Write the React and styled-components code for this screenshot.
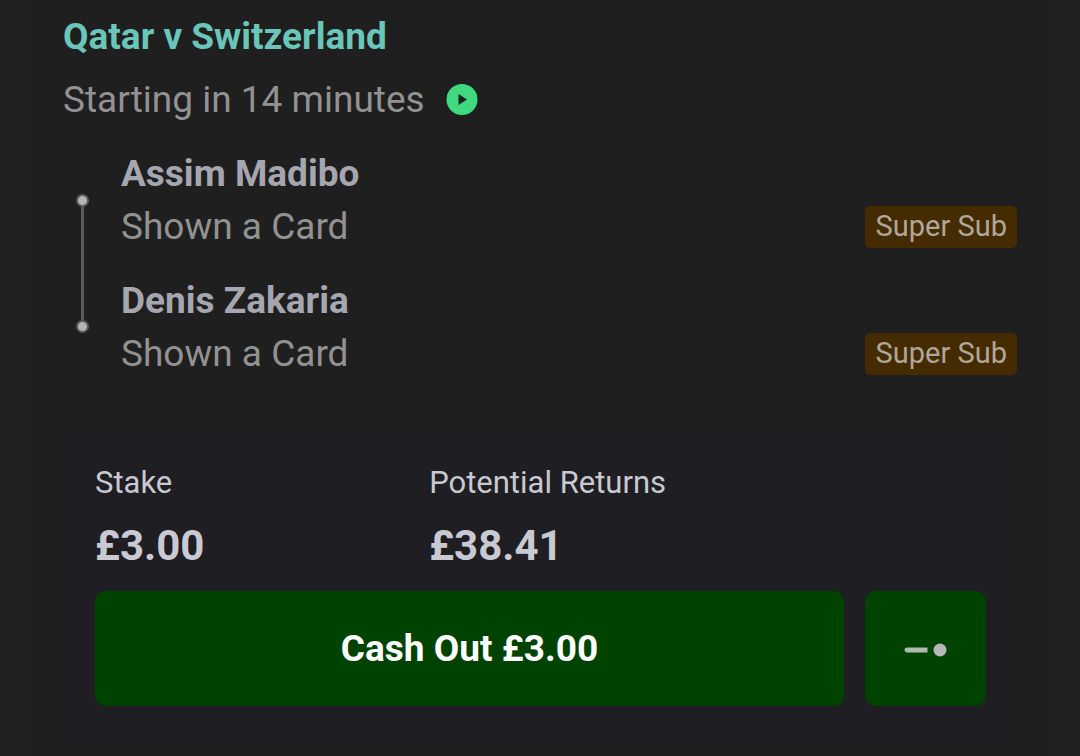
import React from "react";
import styled, { createGlobalStyle } from "styled-components";

const GlobalStyle = createGlobalStyle`
  * {
    box-sizing: border-box;
  }
  body {
    margin: 0;
    background-color: #212121;
    font-family: Roboto, sans-serif;
  }
`;

const Page = styled.main`
  padding: 0 30px;
`;

const BetCard = styled.section`
  min-height: 100vh;
  padding: 5px 32px 15px 32px;
  background-color: #1f1f1f;
  border-left: 1px solid #232323;
  border-right: 1px solid #232323;
`;

const EventTitle = styled.h1`
  margin: 0;
  font-size: 37px;
  font-weight: 700;
  line-height: 63px;
  color: #6ac6b8;
`;

const EventStatus = styled.div`
  display: flex;
  align-items: center;
  gap: 21px;
  font-size: 37px;
  line-height: 63px;
  color: #929292;
`;

const StreamButton = styled.button`
  display: flex;
  padding: 0;
  border: none;
  background: none;
  cursor: pointer;
`;

const Selections = styled.div`
  display: flex;
  gap: 32px;
  margin: 16px 0 52px 0;
`;

const Rail = styled.div`
  display: flex;
  flex-direction: column;
  align-items: center;
  width: 13px;
  margin-left: 13px;
  padding: 47px 0;
`;

const RailDot = styled.span`
  width: 13px;
  height: 13px;
  border: 2px solid #5b5b5d;
  border-radius: 50%;
  background-color: #b4b4b5;
`;

const RailLine = styled.span`
  flex: 1;
  width: 3px;
  background-color: #5b5b5d;
`;

const SelectionList = styled.ul`
  flex: 1;
  display: flex;
  flex-direction: column;
  gap: 21px;
  margin: 0;
  padding: 0;
  list-style: none;
  font-size: 37px;
  line-height: 53px;
`;

const PlayerName = styled.div`
  font-weight: 700;
  color: #a6a6b0;
`;

const MarketRow = styled.div`
  display: flex;
  align-items: center;
  justify-content: space-between;
  color: #929292;
`;

const Badge = styled.span`
  padding: 0 10px 2px 11px;
  border-radius: 5px;
  background-color: #452b00;
  color: #b0a699;
  font-size: 29px;
  line-height: 40px;
`;

const Summary = styled.div`
  padding: 19px 31px 35px 32px;
  border-radius: 10px;
  background-color: #1f1e23;
`;

const Amounts = styled.dl`
  display: grid;
  grid-template-columns: 3fr 5fr;
  margin: 0 0 14px 0;
  line-height: 63px;
  color: #c9c9d1;
`;

const AmountLabel = styled.dt`
  font-size: 31px;
`;

const AmountValue = styled.dd`
  margin: 0;
  font-size: 42px;
  font-weight: 700;
`;

const Actions = styled.div`
  display: flex;
  gap: 21px;
`;

const GreenButton = styled.button`
  display: flex;
  align-items: center;
  justify-content: center;
  flex: ${(props) => (props.$wide ? "1" : "0 0 121px")};
  height: 115px;
  padding: 0;
  border: none;
  border-radius: 10px;
  background-color: #004200;
  color: #ffffff;
  font-family: inherit;
  font-size: 37px;
  font-weight: 700;
  cursor: pointer;
`;

const selections = [
  { player: "Assim Madibo", market: "Shown a Card", tag: "Super Sub" },
  { player: "Denis Zakaria", market: "Shown a Card", tag: "Super Sub" },
];

const amounts = [
  { label: "Stake", value: "£3.00" },
  { label: "Potential Returns", value: "£38.41" },
];

function PlayIcon() {
  return (
    <svg width="32" height="32" viewBox="0 0 32 32" aria-hidden="true">
      <circle cx="16" cy="15.5" r="15.5" fill="#41d980" />
      <path d="M12.5 10v11l8.5-5.5z" fill="#10261a" />
    </svg>
  );
}

function SliderIcon() {
  return (
    <svg width="44" height="16" viewBox="0 0 44 16" aria-hidden="true">
      <path d="M3 6.5h20.5v5H3a2.5 2.5 0 0 1 0-5z" fill="#adbaad" />
      <circle cx="36" cy="9" r="6.5" fill="#b8b8b8" />
    </svg>
  );
}

export default function App() {
  return (
    <Page>
      <GlobalStyle />
      <BetCard>
        <EventTitle>Qatar v Switzerland</EventTitle>
        <EventStatus>
          <span>Starting in 14 minutes</span>
          <StreamButton aria-label="Watch live">
            <PlayIcon />
          </StreamButton>
        </EventStatus>

        <Selections>
          <Rail>
            <RailDot />
            <RailLine />
            <RailDot />
          </Rail>
          <SelectionList>
            {selections.map((selection) => (
              <li key={selection.player}>
                <PlayerName>{selection.player}</PlayerName>
                <MarketRow>
                  <span>{selection.market}</span>
                  <Badge>{selection.tag}</Badge>
                </MarketRow>
              </li>
            ))}
          </SelectionList>
        </Selections>

        <Summary>
          <Amounts>
            {amounts.map((amount) => (
              <div key={amount.label}>
                <AmountLabel>{amount.label}</AmountLabel>
                <AmountValue>{amount.value}</AmountValue>
              </div>
            ))}
          </Amounts>
          <Actions>
            <GreenButton $wide>Cash Out £3.00</GreenButton>
            <GreenButton aria-label="Partial cash out">
              <SliderIcon />
            </GreenButton>
          </Actions>
        </Summary>
      </BetCard>
    </Page>
  );
}
